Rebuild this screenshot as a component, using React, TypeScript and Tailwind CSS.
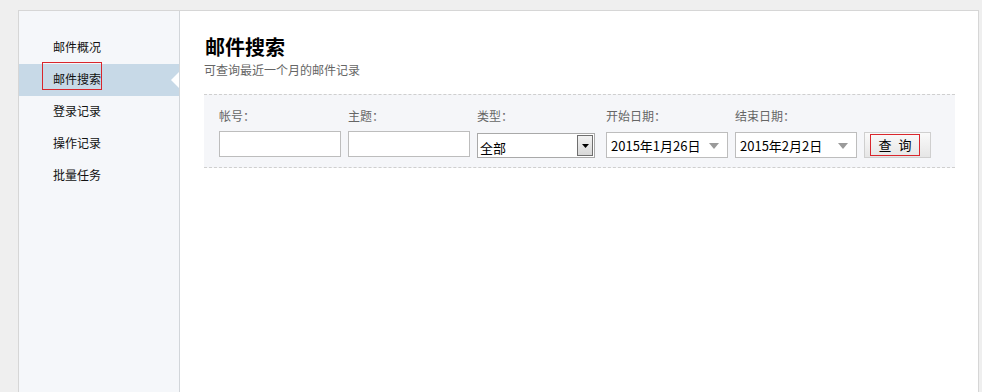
import React from "react";

const font = { fontFamily: '"Noto Sans CJK SC", "Microsoft YaHei", sans-serif' };

function Label({ children }: { children: React.ReactNode }) {
  return <div className="h-[18px] text-[12px] leading-[18px] text-[#666]">{children}</div>;
}

function DateBox({ value }: { value: string }) {
  return (
    <div className="relative flex h-[26px] w-[122px] items-center border border-[#bdbdbd] bg-white pl-[4px] text-[13px] text-black">
      <span className="leading-none">{value}</span>
      <svg className="absolute right-[8px] top-[10px]" width="10" height="6" viewBox="0 0 10 6">
        <path d="M0 0 L10 0 L5 6 Z" fill="#9a9a9a" />
      </svg>
    </div>
  );
}

export default function App() {
  const items = ["邮件概况", "邮件搜索", "登录记录", "操作记录", "批量任务"];
  return (
    <div className="h-[392px] overflow-hidden bg-[#efefef] pl-[18px] pr-[3px] pt-[10px]" style={font}>
      <div className="flex h-[420px] border border-[#d6d6d6] bg-white">
        {/* sidebar */}
        <div className="relative w-[161px] shrink-0 border-r border-[#d2d6da] bg-[#f5f7fa] pt-[21px]">
          {items.map((t, i) => (
            <div
              key={t}
              className={`relative flex h-[32px] items-center pb-[2px] pl-[34px] text-[12px] text-[#111] ${
                i === 1 ? "bg-[#c7d9e7]" : ""
              }`}
            >
              {t}
              {i === 1 && (
                <svg className="absolute right-0 top-[8px]" width="8" height="16" viewBox="0 0 8 16">
                  <path d="M8 0 L0 8 L8 16 Z" fill="#ffffff" />
                </svg>
              )}
            </div>
          ))}
          <div className="absolute left-[23px] top-[51px] h-[28px] w-[60px] border border-[#d9262c]" />
        </div>
        {/* main */}
        <div className="flex-1 pl-[24px] pr-[23px] pt-[22px]">
          <div className="pl-[1px] text-[20px] font-bold leading-[28px] text-black">邮件搜索</div>
          <div className="text-[12px] leading-[18px] text-[#666]">可查询最近一个月的邮件记录</div>
          <div className="mt-[15px] h-[74px] border-y border-dashed border-[#cfcfcf] bg-[#f5f6f9] pl-[15px] pt-[12px]">
            <div className="flex gap-[7px]">
              <div className="w-[122px]">
                <Label>帐号：</Label>
                <div className="mt-[6px] h-[26px] w-[122px] border border-[#bdbdbd] bg-white" />
              </div>
              <div className="w-[122px]">
                <Label>主题：</Label>
                <div className="mt-[6px] h-[26px] w-[122px] border border-[#bdbdbd] bg-white" />
              </div>
              <div className="w-[122px]">
                <Label>类型：</Label>
                <div className="mt-[8px] flex h-[25px] w-[118px] border border-[#a9a9a9] bg-white">
                  <span className="flex-1 pl-[2px] pt-[6px] text-[13px] leading-[16px] text-black">全部</span>
                  <div className="m-[1px] flex w-[16px] items-center justify-center border border-[#6f6f6f] bg-gradient-to-b from-[#f2f2f2] to-[#d8d8d8]">
                    <svg width="7" height="4" viewBox="0 0 7 4">
                      <path d="M0 0 L7 0 L3.5 4 Z" fill="#000" />
                    </svg>
                  </div>
                </div>
              </div>
              <div className="w-[122px]">
                <Label>开始日期：</Label>
                <div className="mt-[7px]">
                  <DateBox value="2015年1月26日" />
                </div>
              </div>
              <div className="w-[122px]">
                <Label>结束日期：</Label>
                <div className="mt-[7px]">
                  <DateBox value="2015年2月2日" />
                </div>
              </div>
              <div className="pt-[25px]">
                <div className="flex h-[26px] w-[67px] items-center border border-[#cfcfcf] bg-gradient-to-b from-[#fafafa] to-[#e6e6e6] pl-[5px]">
                  <div className="flex h-[22px] w-[50px] items-center justify-center gap-[7px] border border-[#d9262c] text-[13px] text-black">
                    <span>查</span>
                    <span>询</span>
                  </div>
                </div>
              </div>
            </div>
          </div>
        </div>
      </div>
    </div>
  );
}
